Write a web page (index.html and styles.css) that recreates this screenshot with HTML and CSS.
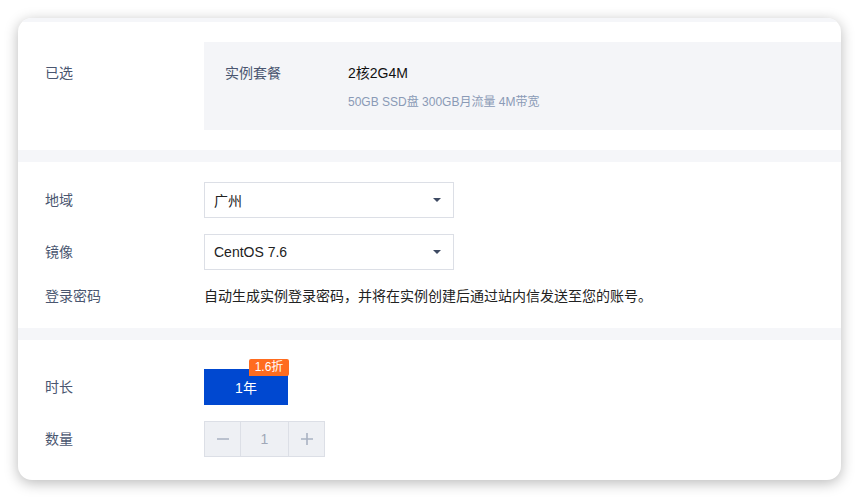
FILE: index.html
```html
<!DOCTYPE html>
<html lang="zh">
<head>
<meta charset="utf-8">
<link rel="stylesheet" href="styles.css">
</head>
<body>
<div class="card">
  <div class="band band-top"></div>
  <section class="sec sec-selected">
    <div class="label label-top">已选</div>
    <div class="picked">
      <div class="picked-name">实例套餐</div>
      <div class="picked-info">
        <div class="picked-main">2核2G4M</div>
        <div class="picked-sub">50GB SSD盘 300GB月流量 4M带宽</div>
      </div>
    </div>
  </section>
  <div class="band"></div>
  <section class="sec sec-config">
    <div class="row">
      <div class="label">地域</div>
      <div class="select"><span>广州</span><i class="caret"></i></div>
    </div>
    <div class="row">
      <div class="label">镜像</div>
      <div class="select"><span>CentOS 7.6</span><i class="caret"></i></div>
    </div>
    <div class="row row-text">
      <div class="label">登录密码</div>
      <div class="desc">自动生成实例登录密码，并将在实例创建后通过站内信发送至您的账号。</div>
    </div>
  </section>
  <div class="band"></div>
  <section class="sec sec-buy">
    <div class="row">
      <div class="label">时长</div>
      <div class="period">1年<span class="badge">1.6折</span></div>
    </div>
    <div class="row">
      <div class="label">数量</div>
      <div class="stepper">
        <span class="step step-minus"><svg width="14" height="14" viewBox="0 0 14 14"><path d="M1 7h12" stroke="#a9b2c2" stroke-width="1.6"/></svg></span>
        <span class="step-num">1</span>
        <span class="step step-plus"><svg width="14" height="14" viewBox="0 0 14 14"><path d="M1 7h12M7 1v12" stroke="#a9b2c2" stroke-width="1.6"/></svg></span>
      </div>
    </div>
  </section>
</div>
</body>
</html>
```

FILE: styles.css
```css
* { box-sizing: border-box; }
html, body { margin: 0; padding: 0; background: #ffffff; }
body {
  font-family: "Liberation Sans", "Noto Sans CJK SC", sans-serif;
  font-size: 14px;
  color: #222;
  padding: 18px;
}
.card {
  width: 823px;
  height: 462px;
  background: #fff;
  border-radius: 14px;
  overflow: hidden;
  box-shadow: 0 3px 14px rgba(0,0,0,0.28);
  display: flex;
  flex-direction: column;
}
.band { height: 12px; background: #f5f6f9; flex: none; }
.band-top { height: 4px; }
.sec { padding-left: 27px; }
.label {
  width: 159px;
  flex: none;
  color: #4a5670;
  line-height: 20px;
}
.sec-selected {
  height: 128px;
  padding-top: 20px;
  display: flex;
}
.label-top { padding-top: 21px; }
.picked {
  flex: 1;
  height: 88px;
  background: #f4f5f8;
  display: flex;
  padding: 21px 0 0 21px;
}
.picked-name { width: 123px; color: #4a5670; line-height: 20px; }
.picked-main { color: #111; line-height: 20px; }
.picked-sub { color: #8a9ab6; font-size: 12px; line-height: 16px; margin-top: 11px; }
.sec-config {
  height: 166px;
  padding-top: 20px;
  display: flex;
  flex-direction: column;
  gap: 16px;
}
.row { display: flex; align-items: center; }
.select {
  width: 250px;
  height: 36px;
  border: 1px solid #dcdfe6;
  display: flex;
  align-items: center;
  justify-content: space-between;
  padding: 0 12px 0 9px;
  color: #222;
}
.caret {
  width: 0; height: 0;
  border-left: 4px solid transparent;
  border-right: 4px solid transparent;
  border-top: 4px solid #3e4a63;
}
.row-text { height: 20px; }
.desc { color: #222; line-height: 20px; }
.sec-buy {
  flex: 1;
  padding-top: 29px;
  display: flex;
  flex-direction: column;
  gap: 16px;
}
.period {
  position: relative;
  width: 84px;
  height: 36px;
  background: #0048d0;
  color: #fff;
  display: flex;
  align-items: center;
  justify-content: center;
}
.badge {
  position: absolute;
  top: -10px;
  right: -1px;
  width: 40px;
  height: 17px;
  background: #ff6c1f;
  color: #fff;
  font-size: 12px;
  line-height: 17px;
  text-align: center;
  border-radius: 2px 2px 2px 0;
}
.stepper {
  display: flex;
  height: 36px;
  border: 1px solid #dcdfe6;
  background: #eef0f4;
}
.step {
  width: 35px;
  display: flex;
  align-items: center;
  justify-content: center;
}
.step-num {
  width: 49px;
  border-left: 1px solid #dcdfe6;
  border-right: 1px solid #dcdfe6;
  display: flex;
  align-items: center;
  justify-content: center;
  color: #a0a8b8;
}
```
